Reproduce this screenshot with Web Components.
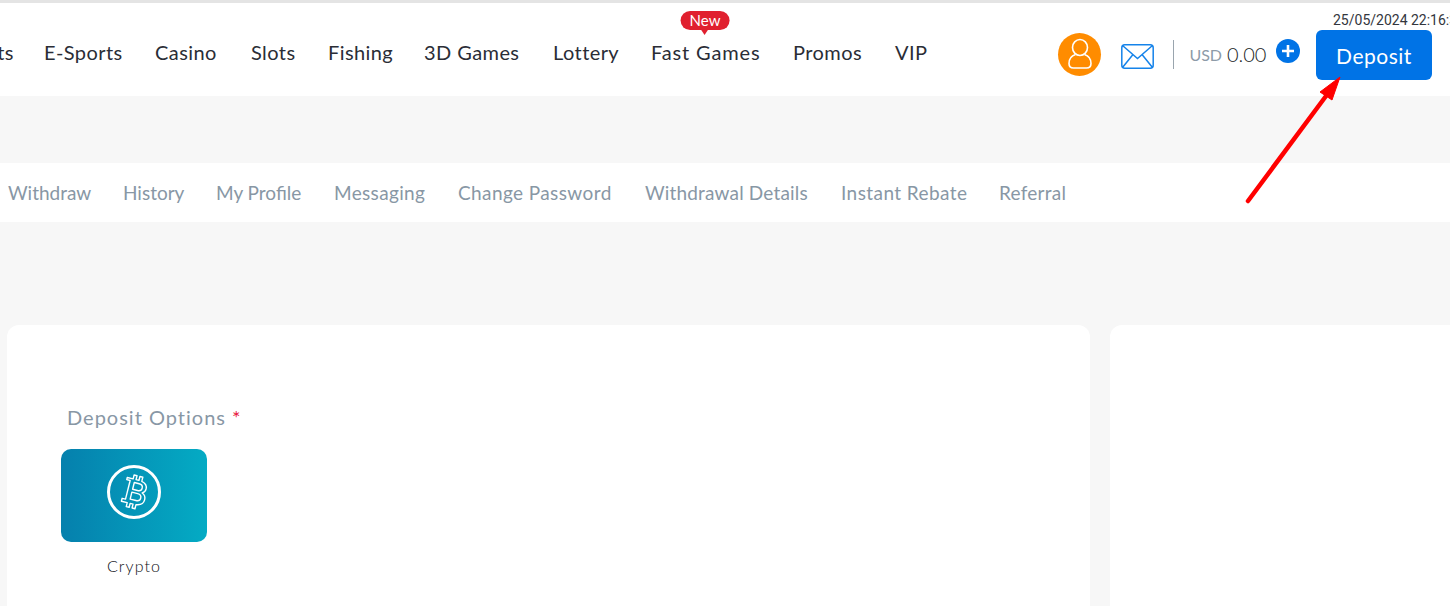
<!DOCTYPE html>
<html>
<head>
<meta charset="utf-8">
<title>Deposit</title>
<style>
  html, body { margin: 0; height: 100%; overflow: hidden; }
  body { background: #f7f7f7; font-family: Lato, "Liberation Sans", sans-serif; }
</style>
</head>
<body>
<app-page></app-page>

<template id="top-header-tpl">
  <style>
    :host { display: flex; height: 93px; background: #fff; border-top: 3px solid #e4e4e4; position: relative; overflow: hidden; color: #1c1f27; }
    nav { display: flex; align-items: center; gap: 32px; height: 98px; margin-left: -45px; font-size: 20px; color: #2a2d36; letter-spacing: .42px; white-space: nowrap; }
    .item { position: relative; flex: none; }
    .badge { position: absolute; left: calc(50% - 1px); top: -29px; transform: translateX(-50%); background: #e0202f; color: #fff; font-size: 15px; letter-spacing: 0; line-height: 19px; padding: 0 9px; border-radius: 10px; }
    .badge::after { content: ""; position: absolute; left: 50%; bottom: -5px; margin-left: -4px; border: 4px solid transparent; border-bottom: 0; border-top: 6px solid #e0202f; }
    .right { margin-left: auto; display: flex; align-items: center; height: 100px; padding-right: 18px; }
    .avatar { width: 43px; height: 43px; border-radius: 50%; background: #ff8c00; display: flex; align-items: center; justify-content: center; margin-top: 2px; }
    .mail { margin-left: 20px; margin-top: 6px; display: block; }
    .sep { width: 1px; height: 29px; background: #9aa5ae; margin-left: 19px; margin-top: 2px; }
    .usd { margin-left: 15px; color: #8d9ba8; font-size: 16px; margin-top: 2px; }
    .amt { margin-left: 5px; font-size: 20px; font-weight: 300; letter-spacing: 0; margin-top: 1px; color: #1c1f27; width: 39px; }
    .plus { margin-left: 10px; margin-top: -4px; width: 24px; height: 24px; border-radius: 50%; background: #0073e6; display: flex; align-items: center; justify-content: center; }
    .dep { margin-left: 16px; width: 116px; height: 50px; background: #0073e6; color: #fff; border-radius: 6px; font-size: 21px; letter-spacing: .5px; display: flex; align-items: center; justify-content: center; margin-top: 3px; padding-top: 1px; box-sizing: border-box; }
    .time { position: absolute; top: 9px; left: 1333px; font-size: 14px; white-space: nowrap; letter-spacing: 0; color: #33363d; font-family: Roboto, sans-serif; }
  </style>
  <nav>
    <span class="item" style="width:57px">Sports</span>
    <span class="item" style="width:79px">E-Sports</span>
    <span class="item" style="width:64px">Casino</span>
    <span class="item" style="width:45px">Slots</span>
    <span class="item" style="width:64px">Fishing</span>
    <span class="item" style="width:97px">3D Games</span>
    <span class="item" style="width:66px">Lottery</span>
    <span class="item" style="width:110px;letter-spacing:.85px">Fast Games<span class="badge">New</span></span>
    <span class="item" style="width:70px">Promos</span>
    <span class="item">VIP</span>
  </nav>
  <div class="right">
    <div class="avatar">
      <svg width="26" height="32" viewBox="0 0 26 32" fill="none" stroke="#fff" stroke-width="1.6">
        <ellipse cx="13" cy="9.5" rx="7.5" ry="8"/>
        <path d="M8.5 16.5C4 18 2 21 2 25.5 2 28.5 4 30 6.5 30h13c2.500 0 4.500-1.500 4.500-4.500 0-4.500-2-7.500-6.500-9"/>
      </svg>
    </div>
    <svg class="mail" width="33" height="25" viewBox="0 0 33 25" fill="none" stroke="#1583ea" stroke-width="1.500">
      <rect x=".8" y=".8" width="31.400" height="23.400" rx="3"/>
      <path d="M1.500 1.500 16.500 14.500 31.500 1.500M1.500 23.500 12 10.500M31.500 23.500 21 10.500"/>
    </svg>
    <div class="sep"></div>
    <span class="usd">USD</span>
    <span class="amt">0.00</span>
    <div class="plus">
      <svg width="14" height="14" viewBox="0 0 14 14" stroke="#fff" stroke-width="2.600"><path d="M7 1v12M1 7h12"/></svg>
    </div>
    <div class="dep">Deposit</div>
  </div>
  <span class="time">25/05/2024 22:16:34</span>
</template>

<template id="sub-nav-tpl">
  <style>
    :host { display: flex; align-items: center; gap: 32px; height: 59px; background: #fff; padding-left: 8px; color: #8897a5; font-size: 19px; white-space: nowrap; overflow: hidden; }
    span { flex: none; }
  </style>
  <span style="width:83px">Withdraw</span>
  <span style="width:61px">History</span>
  <span style="width:86px">My Profile</span>
  <span style="width:92px;letter-spacing:.33px">Messaging</span>
  <span style="width:155px;letter-spacing:.4px">Change Password</span>
  <span style="width:164px;letter-spacing:.17px">Withdrawal Details</span>
  <span style="width:126px;letter-spacing:.43px">Instant Rebate</span>
  <span style="letter-spacing:.25px">Referral</span>
</template>

<template id="deposit-card-tpl">
  <style>
    :host { display: block; background: #fff; border-radius: 12px 12px 0 0; flex: none; width: 1083px; height: 281px; box-sizing: border-box; padding: 79px 0 0 54px; }
    .label { font-size: 20px; letter-spacing: 1px; color: #8897a5; margin-left: 6px; line-height: 26px; }
    .label i { color: #e8173f; font-style: normal; font-size: 20px; }
    .tile { margin-top: 19px; width: 146px; height: 93px; box-sizing: border-box; padding-bottom: 8px; border-radius: 10px; background: linear-gradient(90deg, #0580ad, #04abc4); display: flex; align-items: center; justify-content: center; }
    .name { width: 146px; text-align: center; margin-top: 14px; font-size: 16px; font-weight: 300; letter-spacing: 1.1px; color: #0d0f14; }
  </style>
  <div class="label">Deposit Options <i>*</i></div>
  <div class="tile">
    <svg width="54" height="54" viewBox="0 0 54 54" fill="none" stroke="#fff">
      <circle cx="27" cy="27" r="25.500" stroke-width="3"/>
      <g stroke-width="1.400" stroke-linejoin="round" transform="rotate(14 27 27)">
        <path d="M17 14.500h6v-4h3v4h3v-4h3v4.300c4 .9 6 3.300 6 6.200 0 2.200-1 4-2.800 5 2.500 1 4 3.200 4 5.800 0 3.800-2.800 6.500-7.200 7v4.200h-3v-4h-3v4h-3v-4h-6v-3h3.500v-19.200H17z"/>
        <path d="M25 17.700h5c2.300 0 4 1.400 4 3.500s-1.700 3.500-4 3.500h-5zM25 27.700h6c2.300 0 4 1.500 4 3.600s-1.700 3.500-4 3.500h-6z"/>
      </g>
    </svg>
  </div>
  <div class="name">Crypto</div>
</template>

<template id="side-card-tpl">
  <style>
    :host { display: block; background: #fff; border-radius: 12px 0 0 0; flex: 1; height: 281px; }
  </style>
</template>

<template id="app-page-tpl">
  <style>
    :host { display: block; position: relative; width: 100%; height: 606px; overflow: hidden; }
    .band { height: 67px; }
    .content { display: flex; gap: 20px; padding: 103px 0 0 7px; }
    svg { position: absolute; left: 1240px; top: 75px; }
  </style>
  <top-header></top-header>
  <div class="band"></div>
  <sub-nav></sub-nav>
  <div class="content">
    <deposit-card></deposit-card>
    <side-card></side-card>
  </div>
  <svg width="105" height="135" viewBox="0 0 105 135" fill="red">
    <path d="M8 126 86 21" stroke="red" stroke-width="4.500" stroke-linecap="round"/>
    <path d="M100 2 80 17 92 25z" stroke="red" stroke-width="1"/>
  </svg>
</template>

<script>
  function register(tag, tplId) {
    customElements.define(tag, class extends HTMLElement {
      constructor() {
        super();
        this.root = this.attachShadow({ mode: "open" });
        this.root.appendChild(document.getElementById(tplId).content.cloneNode(true));
      }
    });
  }
  register("top-header", "top-header-tpl");
  register("sub-nav", "sub-nav-tpl");
  register("deposit-card", "deposit-card-tpl");
  register("side-card", "side-card-tpl");
  register("app-page", "app-page-tpl");
</script>
</body>
</html>
